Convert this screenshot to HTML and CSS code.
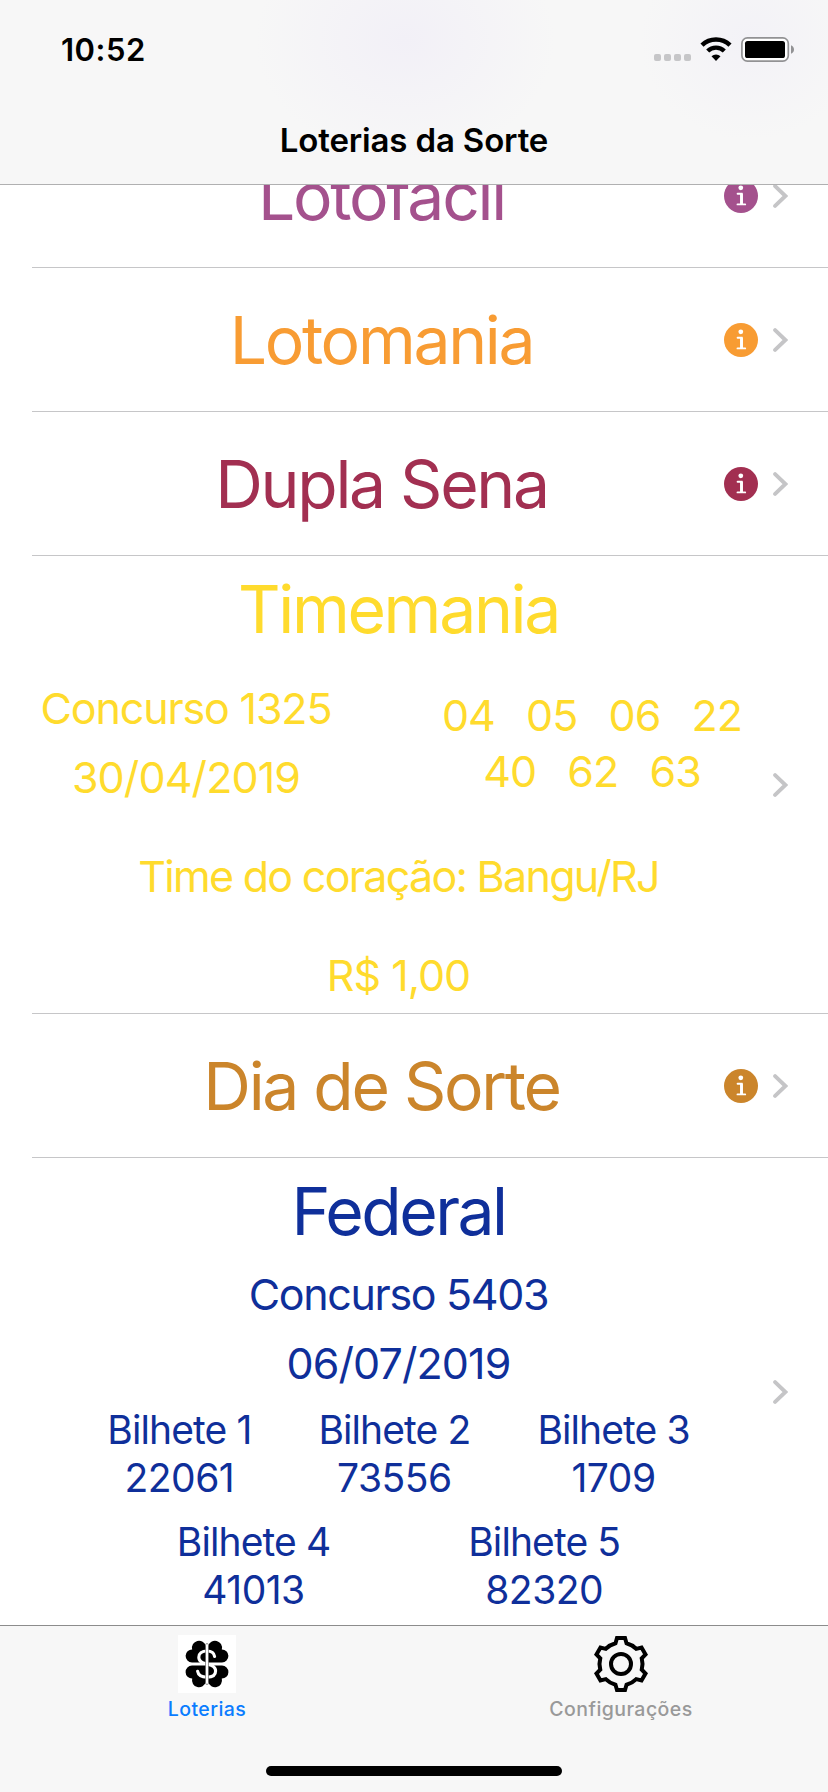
FILE: index.html
```html
<!DOCTYPE html>
<html lang="pt-BR">
<head>
<meta charset="utf-8">
<title>Loterias da Sorte</title>
<link rel="stylesheet" href="styles.css">
</head>
<body>
<svg class="defs" width="0" height="0" aria-hidden="true">
  <symbol id="info" viewBox="0 0 34 34">
    <circle cx="17" cy="17" r="17" fill="currentColor"/>
    <circle cx="16.8" cy="8.8" r="2.4" fill="#fff"/>
    <path d="M13.6 14.8H17.6V25.3M13.5 25.4H21.2" fill="none" stroke="#fff" stroke-width="1.9" stroke-linecap="round"/>
    <path d="M17.5 14.4V25" stroke="#fff" stroke-width="2.9"/>
  </symbol>
  <symbol id="chevron" viewBox="0 0 15 24">
    <path d="M2.1 2.1L12.4 12L2.1 21.9" fill="none" stroke="#c5c5c7" stroke-width="3.9" stroke-linecap="round"/>
  </symbol>
</svg>
<div class="phone">
  <header class="nav">
    <div class="status">
      <span class="time">10:52</span>
      <span class="signal"><i></i><i></i><i></i><i></i></span>
      <svg class="wifi" width="32" height="25" viewBox="0 0 32 25">
        <path d="M2 8.1A20 20 0 0 1 30 8.1" fill="none" stroke="#000" stroke-width="4.5"/>
        <path d="M7.7 14A12 12 0 0 1 24.3 14" fill="none" stroke="#000" stroke-width="4.4"/>
        <path d="M11.5 19.3A6.5 6.5 0 0 1 20.5 19.3L16 24Z"/>
      </svg>
      <svg class="battery" width="54" height="25" viewBox="0 0 54 25">
        <rect x=".9" y=".9" width="46.4" height="23.2" rx="5.5" fill="#fff" stroke="#929294" stroke-width="1.7"/>
        <rect x="4" y="4" width="40" height="17" rx="2.6"/>
        <path d="M50 8.2Q53 9.5 53 12.5Q53 15.5 50 16.8Z" fill="#929294"/>
      </svg>
    </div>
    <h1 class="nav-title">Loterias da Sorte</h1>
  </header>

  <main class="list">
    <section class="row row-short lotofacil">
      <h2 class="title">Lotofácil</h2>
      <svg class="info"><use href="#info"/></svg>
      <svg class="chevron"><use href="#chevron"/></svg>
    </section>
    <section class="row row-short lotomania">
      <h2 class="title">Lotomania</h2>
      <svg class="info"><use href="#info"/></svg>
      <svg class="chevron"><use href="#chevron"/></svg>
    </section>
    <section class="row row-short dupla-sena">
      <h2 class="title">Dupla Sena</h2>
      <svg class="info"><use href="#info"/></svg>
      <svg class="chevron"><use href="#chevron"/></svg>
    </section>
    <section class="row timemania">
      <div class="details">
        <h2 class="title">Timemania</h2>
        <div class="draw">
          <div class="contest">
            <p class="line contest-name">Concurso 1325</p>
            <p class="line contest-date">30/04/2019</p>
          </div>
          <div class="numbers">
            <p class="balls"><span>04</span><span>05</span><span>06</span><span>22</span></p>
            <p class="balls"><span>40</span><span>62</span><span>63</span></p>
          </div>
        </div>
        <p class="team">Time do coração: Bangu/RJ</p>
        <p class="prize">R$ 1,00</p>
      </div>
      <svg class="chevron"><use href="#chevron"/></svg>
    </section>
    <section class="row row-short dia-de-sorte">
      <h2 class="title">Dia de Sorte</h2>
      <svg class="info"><use href="#info"/></svg>
      <svg class="chevron"><use href="#chevron"/></svg>
    </section>
    <section class="row federal">
      <div class="details">
        <h2 class="title">Federal</h2>
        <p class="line contest-name first-line">Concurso 5403</p>
        <p class="line contest-date">06/07/2019</p>
        <div class="tickets">
          <p class="ticket">Bilhete 1<br><span class="ticket-number">22061</span></p>
          <p class="ticket">Bilhete 2<br><span class="ticket-number">73556</span></p>
          <p class="ticket">Bilhete 3<br><span class="ticket-number">1709</span></p>
        </div>
        <div class="tickets tickets-wide">
          <p class="ticket">Bilhete 4<br><span class="ticket-number">41013</span></p>
          <p class="ticket">Bilhete 5<br><span class="ticket-number">82320</span></p>
        </div>
      </div>
      <svg class="chevron"><use href="#chevron"/></svg>
    </section>
  </main>

  <footer class="bottom">
    <nav class="tabs">
      <div class="tab tab-active">
        <svg class="tab-icon" width="58" height="58" viewBox="0 0 58 58">
          <rect width="58" height="58" fill="#fff"/>
          <g>
            <path d="M27.8 27.4H14A6.4 6.4 0 0 1 14.2 14.4A6.9 6.9 0 0 1 27.8 11Z"/>
            <path d="M30.2 27.4H44A6.4 6.4 0 0 0 43.8 14.4A6.9 6.9 0 0 0 30.2 11Z"/>
            <path d="M27.8 30.6H14A6.4 6.4 0 0 0 14.2 43.6A6.9 6.9 0 0 0 27.8 47Z"/>
            <path d="M30.2 30.6H44A6.4 6.4 0 0 1 43.8 43.6A6.9 6.9 0 0 1 30.2 47Z"/>
          </g>
          <path d="M36.6 21.5C36 17.5 33 16 29 16C23.8 16 20.8 18.6 20.8 22.2C20.8 26.8 25 27.8 29 29C33.5 30.4 37.6 31.3 37.6 36C37.6 40 34.3 42.2 29 42.2C24 42.2 20.3 40.2 19.6 36.3" fill="none" stroke="#fff" stroke-width="3.1" stroke-linecap="round"/>
          <rect x="27.5" y="8.5" width="3" height="41" rx="1.5" fill="#fff" stroke="#333" stroke-width=".5"/>
        </svg>
        <span class="tab-label">Loterias</span>
      </div>
      <div class="tab">
        <svg class="tab-icon" width="58" height="58" viewBox="-29 -29 58 58">
          <path d="M-5.5 -20.8L-4 -26H4L5.5 -20.8A21.5 21.5 0 0 1 15.26 -15.16L20.52 -16.46L24.52 -9.54L20.76 -5.64A21.5 21.5 0 0 1 20.76 5.64L24.52 9.54L20.52 16.46L15.26 15.16A21.5 21.5 0 0 1 5.5 20.8L4 26H-4L-5.5 20.8A21.5 21.5 0 0 1 -15.26 15.16L-20.52 16.46L-24.52 9.54L-20.76 5.64A21.5 21.5 0 0 1 -20.76 -5.64L-24.52 -9.54L-20.52 -16.46L-15.26 -15.16A21.5 21.5 0 0 1 -5.5 -20.8Z" fill="none" stroke="#000" stroke-width="4"/>
          <circle r="10" fill="none" stroke="#000" stroke-width="4"/>
        </svg>
        <span class="tab-label">Configurações</span>
      </div>
    </nav>
    <div class="home-bar"></div>
  </footer>
</div>
</body>
</html>
```

FILE: styles.css
```css
* {
  box-sizing: border-box;
}

body,
h1,
h2,
p {
  margin: 0;
}

body {
  font-family: Inter, "Liberation Sans", sans-serif;
  background: #fff;
}

.defs {
  position: absolute;
}

.phone {
  display: flex;
  flex-direction: column;
  width: 828px;
  height: 1792px;
  overflow: hidden;
}

/* Navigation bar */
.nav {
  flex: none;
  height: 185px;
  border-bottom: 1px solid #b0b0b1;
  background:
    radial-gradient(ellipse 150px 120px at 405px 40px, #f2f0f7, rgba(242, 240, 247, 0)),
    radial-gradient(ellipse 110px 100px at 750px 40px, #f3f2f7, rgba(243, 242, 247, 0)),
    #f7f7f7;
}

.status {
  display: flex;
  align-items: flex-start;
  height: 100px;
  padding: 37px 33px 0 61px;
}

.time {
  margin-right: auto;
  font-size: 31px;
  font-weight: 600;
  line-height: 26px;
  letter-spacing: 0.5px;
}

.signal {
  display: flex;
  gap: 3px;
  padding-top: 17px;
  margin-right: 9px;
}

.signal i {
  width: 7px;
  height: 7px;
  border-radius: 2px;
  background: #c6c6c8;
}

.wifi {
  margin-right: 9px;
}

.nav-title {
  font-size: 33px;
  font-weight: 600;
  line-height: 80px;
  letter-spacing: -0.15px;
  text-align: center;
  white-space: nowrap;
}

/* Lottery list */
.list {
  flex: none;
  height: 1440px;
  overflow: hidden;
}

.row {
  display: flex;
  align-items: center;
  height: 144px;
  background: linear-gradient(#c6c6c8, #c6c6c8) 32px 100% / 796px 1px no-repeat;
}

.row-short {
  padding-left: 47px;
}

.row-short .title {
  width: 669px;
}

.title {
  font-size: 66px;
  font-weight: 400;
  line-height: 80px;
  letter-spacing: -2.3px;
  text-align: center;
  white-space: nowrap;
}

.info {
  flex: none;
  width: 34px;
  height: 34px;
  margin: 0 15px 0 8px;
}

.chevron {
  flex: none;
  width: 15px;
  height: 24px;
}

.lotofacil {
  margin-top: -61px;
  color: #a4518d;
}

.lotomania {
  color: #f89c33;
}

.dupla-sena {
  color: #a22f51;
}

.timemania {
  height: 458px;
  color: #ffdb2d;
}

.dia-de-sorte {
  color: #cb852b;
}

.federal {
  height: 468px;
  color: #0f2f9a;
}

.federal .title {
  letter-spacing: -2.5px;
}

.details {
  align-self: flex-start;
  width: 733px;
  margin: 13px 8px 0 32px;
  font-size: 43px;
  text-align: center;
  white-space: nowrap;
}

.draw {
  display: flex;
  justify-content: space-between;
  margin-top: 25px;
}

.contest {
  width: 308px;
}

.line {
  line-height: 69px;
  letter-spacing: -0.9px;
}

.contest-name {
  letter-spacing: -1.15px;
}

.first-line {
  margin-top: 9px;
  letter-spacing: -1.35px;
}

.numbers {
  width: 346px;
  padding-top: 13px;
}

.balls {
  display: flex;
  justify-content: center;
  gap: 31px;
  line-height: 56px;
  letter-spacing: -0.9px;
}

.team {
  margin-top: 34px;
  line-height: 60px;
  letter-spacing: -1.7px;
}

.prize {
  margin-top: 39px;
  line-height: 60px;
  letter-spacing: -1px;
}

.tickets {
  display: flex;
  justify-content: center;
  gap: 67px;
  margin-top: 8px;
  font-size: 39px;
  line-height: 48px;
  letter-spacing: -0.9px;
}

.ticket-number {
  letter-spacing: -0.5px;
}

.tickets-wide {
  gap: 138px;
  margin-top: 16px;
}

/* Tab bar */
.bottom {
  display: flex;
  flex-direction: column;
  align-items: center;
  height: 167px;
  border-top: 1px solid #8c8c8c;
  background: #f7f7f7;
}

.tabs {
  display: flex;
  width: 828px;
  height: 140px;
}

.tab {
  display: flex;
  flex: 1;
  flex-direction: column;
  align-items: center;
  padding-top: 9px;
  color: #999;
}

.tab-active {
  color: #0a7cff;
}

.tab-label {
  margin-top: 4px;
  font-size: 19.5px;
  font-weight: 500;
  line-height: 24px;
  letter-spacing: 0.45px;
}

.home-bar {
  width: 296px;
  height: 10px;
  border-radius: 5px;
  background: #000;
}
```
